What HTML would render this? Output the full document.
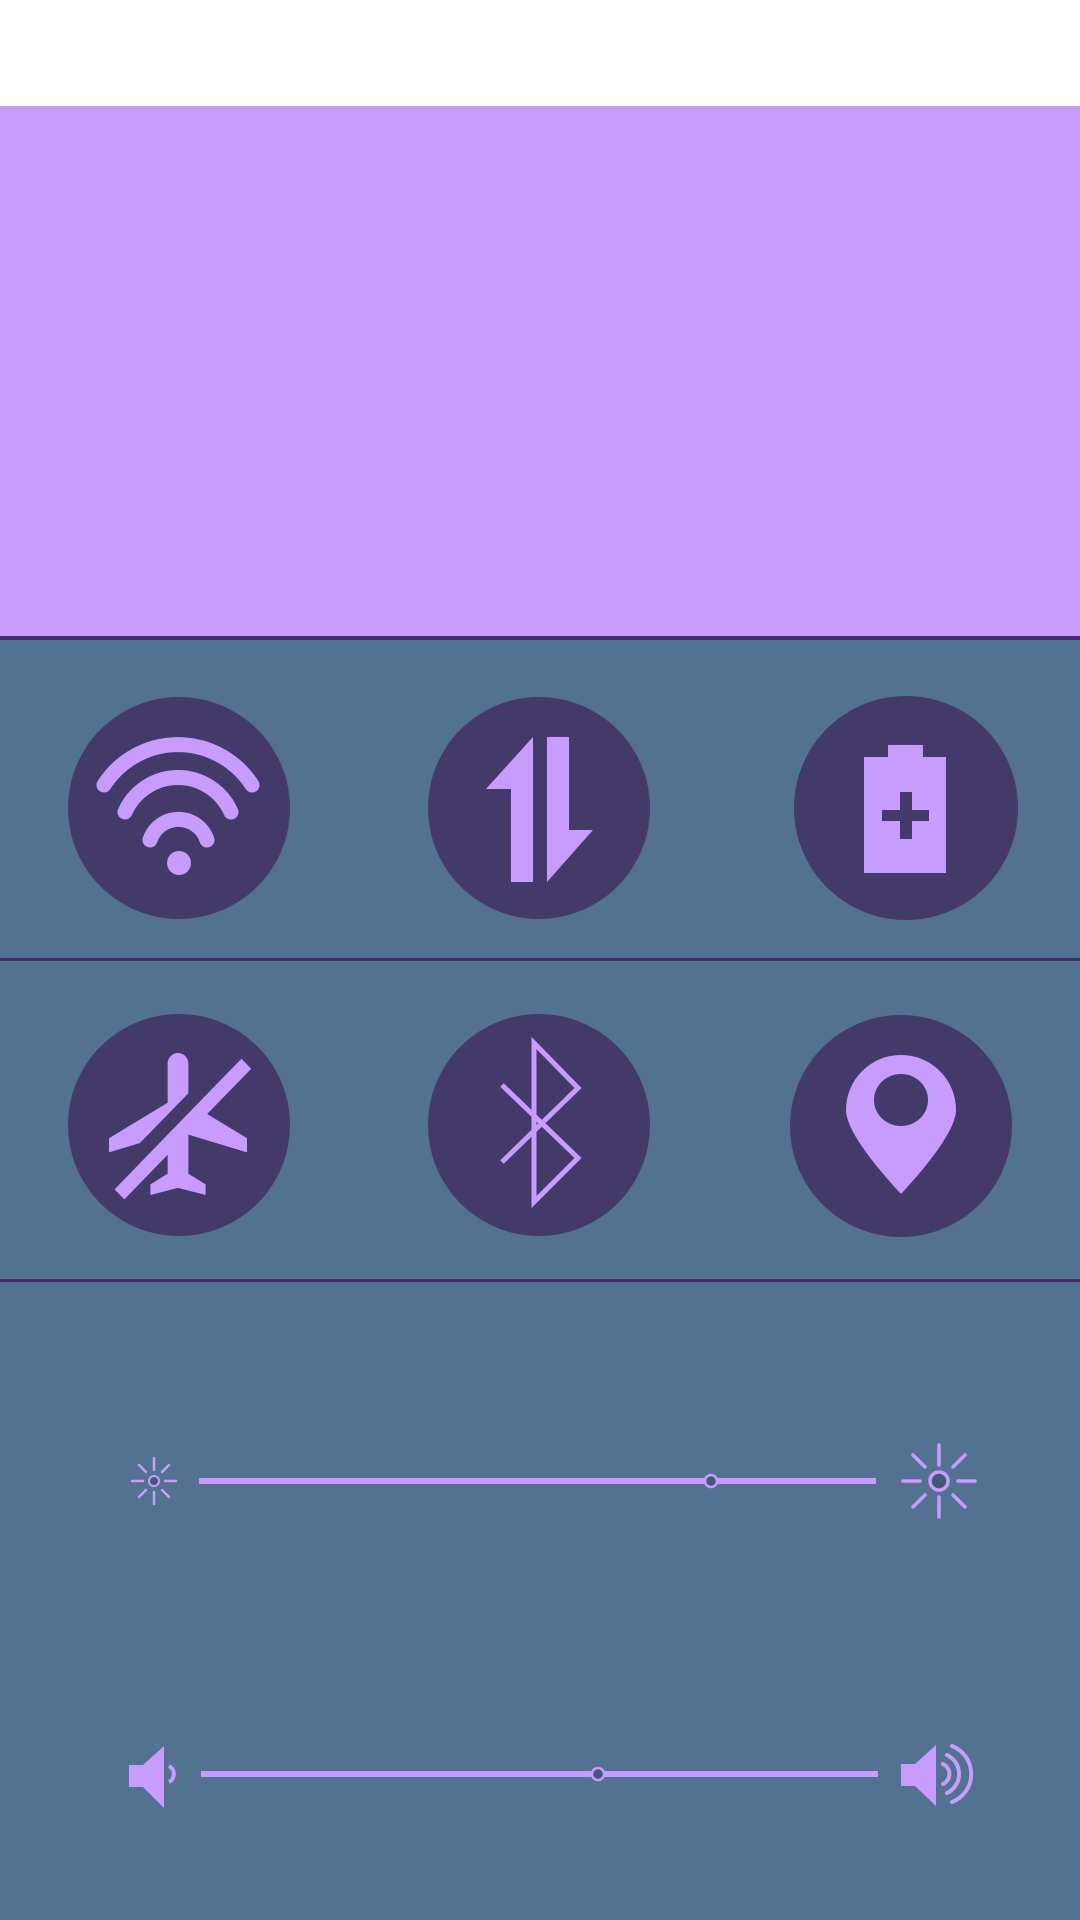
<!DOCTYPE html>
<html><head><meta charset="utf-8"><style>
html,body{margin:0;padding:0;width:1080px;height:1920px;overflow:hidden;background:#537190}
svg{display:block}
</style></head><body>
<svg width="1080" height="1920" viewBox="0 0 1080 1920" xmlns="http://www.w3.org/2000/svg">
<rect x="0" y="0" width="1080" height="106" fill="#ffffff"/>
<rect x="0" y="106" width="1080" height="531" fill="#c89cff"/>
<rect x="0" y="637" width="1080" height="1283" fill="#537190"/>
<rect x="0" y="636" width="1080" height="4" fill="#452a6e"/>
<rect x="0" y="958" width="1080" height="3" fill="#452a6e"/>
<rect x="0" y="1279" width="1080" height="3" fill="#452a6e"/>

<g fill="#433a6a">
<circle cx="179" cy="808" r="111"/>
<circle cx="539" cy="808" r="111"/>
<circle cx="906" cy="808" r="112"/>
<circle cx="179" cy="1125" r="111"/>
<circle cx="539" cy="1125" r="111"/>
<circle cx="901" cy="1126" r="111"/>
</g>

<!-- wifi -->
<g fill="none" stroke="#c89cff" stroke-width="15" stroke-linecap="round">
<path d="M104,785 A88,88 0 0 1 252,785"/>
<path d="M125,812 A58,58 0 0 1 231,812"/>
<path d="M150,840 A30,30 0 0 1 207,840"/>
</g>
<circle cx="179" cy="863" r="12" fill="#c89cff"/>

<!-- data -->
<g fill="#c89cff">
<polygon points="511,882 511,789 486,789 533,737 533,882"/>
<polygon points="547,737 569,737 569,830 593,830 547,882"/>
</g>

<!-- battery -->
<rect x="888" y="745" width="35" height="13" fill="#c89cff"/>
<rect x="864" y="757" width="82" height="116" fill="#c89cff"/>
<rect x="882" y="810" width="47" height="11" fill="#433a6a"/>
<rect x="900" y="792" width="12" height="47" fill="#433a6a"/>

<!-- airplane inactive -->
<path fill="#c89cff" transform="translate(178,1124) scale(-6.9,7.1) translate(-12,-12)" d="M10.5 7.67V3.5c0-.83.67-1.5 1.5-1.5s1.5.67 1.5 1.5V9l8.5 5v2l-4.49-1.320-7.010-7.01zm9.28 14.94l1.41-1.410-7.690-7.7-3.940-3.94-6.750-6.75-1.420 1.41 6.380 6.38L2 14v2l8.5-2.5V19L8 20.5V22l4-1 4 1v-1.5L13.5 19v-2.67l6.28 6.28z"/>

<!-- bluetooth -->
<polyline fill="none" stroke="#c89cff" stroke-width="5" points="502,1085 578,1158 534,1202 534,1043 578,1088 502,1162"/>

<!-- location -->
<path fill="#c89cff" d="M901,1194 C875,1166 846,1130 846,1110 A55,55 0 1 1 956,1110 C956,1130 927,1166 901,1194 Z"/>
<ellipse cx="901" cy="1100" rx="27" ry="26" fill="#433a6a"/>

<!-- brightness slider -->
<rect x="199" y="1478" width="677" height="6" fill="#c89cff"/>
<circle cx="711" cy="1481" r="6" fill="#3f5a78" stroke="#c89cff" stroke-width="2.5"/>
<g stroke="#c89cff" stroke-width="2.5" stroke-linecap="round">
<line x1="154" y1="1458" x2="154" y2="1470"/><line x1="154" y1="1492" x2="154" y2="1504"/>
<line x1="132" y1="1481" x2="143" y2="1481"/><line x1="165" y1="1481" x2="176" y2="1481"/>
<line x1="139" y1="1465" x2="146" y2="1472"/><line x1="169" y1="1465" x2="162" y2="1472"/>
<line x1="139" y1="1497" x2="146" y2="1490"/><line x1="169" y1="1497" x2="162" y2="1490"/>
</g>
<circle cx="154" cy="1481" r="5" fill="#3f5a78" stroke="#c89cff" stroke-width="2"/>
<g stroke="#c89cff" stroke-width="3.5" stroke-linecap="round">
<line x1="939" y1="1445" x2="939" y2="1465"/><line x1="939" y1="1497" x2="939" y2="1517"/>
<line x1="903" y1="1481" x2="920" y2="1481"/><line x1="958" y1="1481" x2="975" y2="1481"/>
<line x1="913" y1="1455" x2="925" y2="1467"/><line x1="965" y1="1455" x2="953" y2="1467"/>
<line x1="913" y1="1507" x2="925" y2="1495"/><line x1="965" y1="1507" x2="953" y2="1495"/>
</g>
<circle cx="939" cy="1481" r="9" fill="#3f5a78" stroke="#c89cff" stroke-width="3.5"/>

<!-- volume slider -->
<rect x="201" y="1771" width="677" height="6" fill="#c89cff"/>
<circle cx="598" cy="1774" r="6" fill="#3f5a78" stroke="#c89cff" stroke-width="2.5"/>
<path fill="#c89cff" d="M129,1765 H143 L164,1746 V1808 L143,1787 H129 Z"/>
<path fill="none" stroke="#c89cff" stroke-width="4" d="M169,1766 A9,9 0 0 1 169,1782"/>
<path fill="#c89cff" d="M901,1764 H915 L936,1745 V1806 L915,1786 H901 Z"/>
<g fill="none" stroke="#c89cff" stroke-width="4" stroke-linecap="round">
<path d="M943,1764 A11,11 0 0 1 943,1784"/>
<path d="M947,1755 A21,21 0 0 1 947,1793"/>
<path d="M952,1746 A30,30 0 0 1 952,1802"/>
</g>
</svg>
</body></html>
